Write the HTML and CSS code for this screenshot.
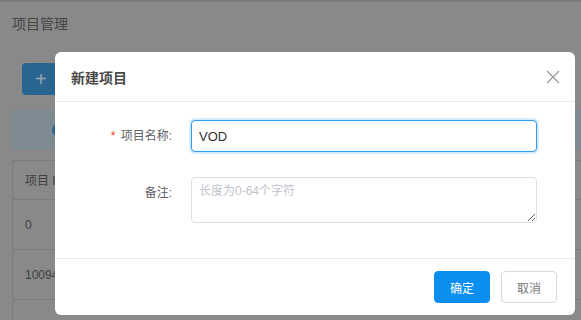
FILE: index.html
```html
<!DOCTYPE html>
<html lang="zh-CN">
<head>
  <meta charset="UTF-8">
  <title>项目管理</title>
  <link rel="stylesheet" href="styles.css">
</head>
<body>
  <div class="page">
    <div class="topline"></div>
    <h1 class="page-title">项目管理</h1>
    <div class="toolbar">
      <button class="btn-add">+</button>
    </div>
    <div class="notice"><span class="notice-dot"></span></div>
    <div class="table">
      <div class="row head">项目 ID</div>
      <div class="row">0</div>
      <div class="row">100945</div>
      <div class="row last"></div>
    </div>
  </div>

  <div class="modal">
    <div class="modal-header">
      <span class="modal-title">新建项目</span>
      <svg class="modal-close" width="14" height="14" viewBox="0 0 14 14">
        <path d="M1 1 L13 13 M13 1 L1 13" stroke="#999" stroke-width="1.2" fill="none"/>
      </svg>
    </div>
    <div class="modal-body">
      <div class="form-row">
        <label class="form-label"><span class="req">*</span>项目名称:</label>
        <input class="form-input focus" type="text" value="VOD">
      </div>
      <div class="form-row">
        <label class="form-label">备注:</label>
        <textarea class="form-textarea" placeholder="长度为0-64个字符"></textarea>
      </div>
    </div>
    <div class="modal-footer">
      <button class="btn btn-primary">确定</button>
      <button class="btn btn-default">取消</button>
    </div>
  </div>
</body>
</html>
```

FILE: styles.css
```css
* {
  box-sizing: border-box;
}

body {
  margin: 0;
  font-family: "Liberation Sans", "Noto Sans CJK SC", sans-serif;
  background: #898989;
  overflow: hidden;
  height: 320px;
}

.page {
  padding: 0 0 0 12px;
  height: 320px;
  overflow: hidden;
}

.topline {
  height: 2px;
  margin-left: -12px;
  background: #7a7a7a;
}

.page-title {
  margin: 0;
  padding-top: 12px;
  font-size: 14px;
  font-weight: normal;
  line-height: 20px;
  color: #454545;
}

.toolbar {
  padding: 29px 0 0 10px;
}

.btn-add {
  width: 40px;
  height: 32px;
  border: none;
  border-radius: 4px;
  background: #2a6591;
  color: #9aa5ad;
  font-size: 20px;
  line-height: 32px;
  text-align: left;
  padding: 0 0 0 13px;
}

.notice {
  margin-top: 15px;
  height: 40px;
  background: #7f8b92;
  position: relative;
}

.notice-dot {
  position: absolute;
  left: 40px;
  top: 13px;
  width: 14px;
  height: 14px;
  border-radius: 50%;
  background: #2a6591;
}

.table {
  margin-top: 10px;
  border-left: 1px solid #7c7c7c;
}

.row {
  height: 50px;
  padding-left: 12px;
  line-height: 50px;
  font-size: 12px;
  color: #404040;
  border-bottom: 1px solid #7c7c7c;
}

.row.head {
  height: 40px;
  line-height: 40px;
  border-top: 1px solid #7c7c7c;
}

.row.last {
  height: 20px;
  border-bottom: none;
}

/* modal */
.modal {
  position: absolute;
  left: 55px;
  top: 52px;
  width: 520px;
  height: 263px;
  background: #fff;
  border-radius: 6px;
  display: flex;
  flex-direction: column;
}

.modal-header {
  height: 50px;
  padding: 0 16px;
  display: flex;
  align-items: center;
  justify-content: space-between;
  border-bottom: 1px solid #e8eaec;
}

.modal-title {
  font-size: 14px;
  font-weight: bold;
  color: #4a4a4a;
}

.modal-close {
  margin-right: -1px;
}

.modal-body {
  flex: 1;
  padding: 18px 38px 0 0;
}

.form-row {
  display: flex;
  align-items: flex-start;
  margin-bottom: 24px;
}

.form-label {
  width: 136px;
  padding-right: 19px;
  text-align: right;
  font-size: 12px;
  line-height: 32px;
  color: #5f6167;
}

.req {
  color: #ed3f14;
  margin-right: 4px;
  font-family: "Liberation Mono", monospace;
}

.form-input,
.form-textarea {
  width: 346px;
  border: 1px solid #dcdee2;
  border-radius: 4px;
  font-family: inherit;
  font-size: 13px;
  color: #333;
  padding: 4px 7px;
  outline: none;
}

.form-input {
  height: 32px;
}

.form-input.focus {
  border-color: #2d9cf0;
  box-shadow: 0 0 0 2px rgba(45, 156, 240, 0.2);
}

.form-textarea {
  height: 46px;
  font-size: 12px;
  line-height: 18px;
  resize: vertical;
}

.form-textarea::placeholder {
  color: #c0c4cc;
}

.modal-footer {
  height: 57px;
  border-top: 1px solid #e8eaec;
  display: flex;
  justify-content: flex-end;
  align-items: center;
  gap: 11px;
  padding: 0 18px 0 0;
}

.btn {
  width: 56px;
  height: 32px;
  border-radius: 4px;
  font-family: inherit;
  font-size: 12px;
  cursor: pointer;
}

.btn-primary {
  background: #0a8ff0;
  border: 1px solid #0a8ff0;
  color: #fff;
}

.btn-default {
  background: #fff;
  border: 1px solid #d7d9dd;
  color: #777;
}
```
